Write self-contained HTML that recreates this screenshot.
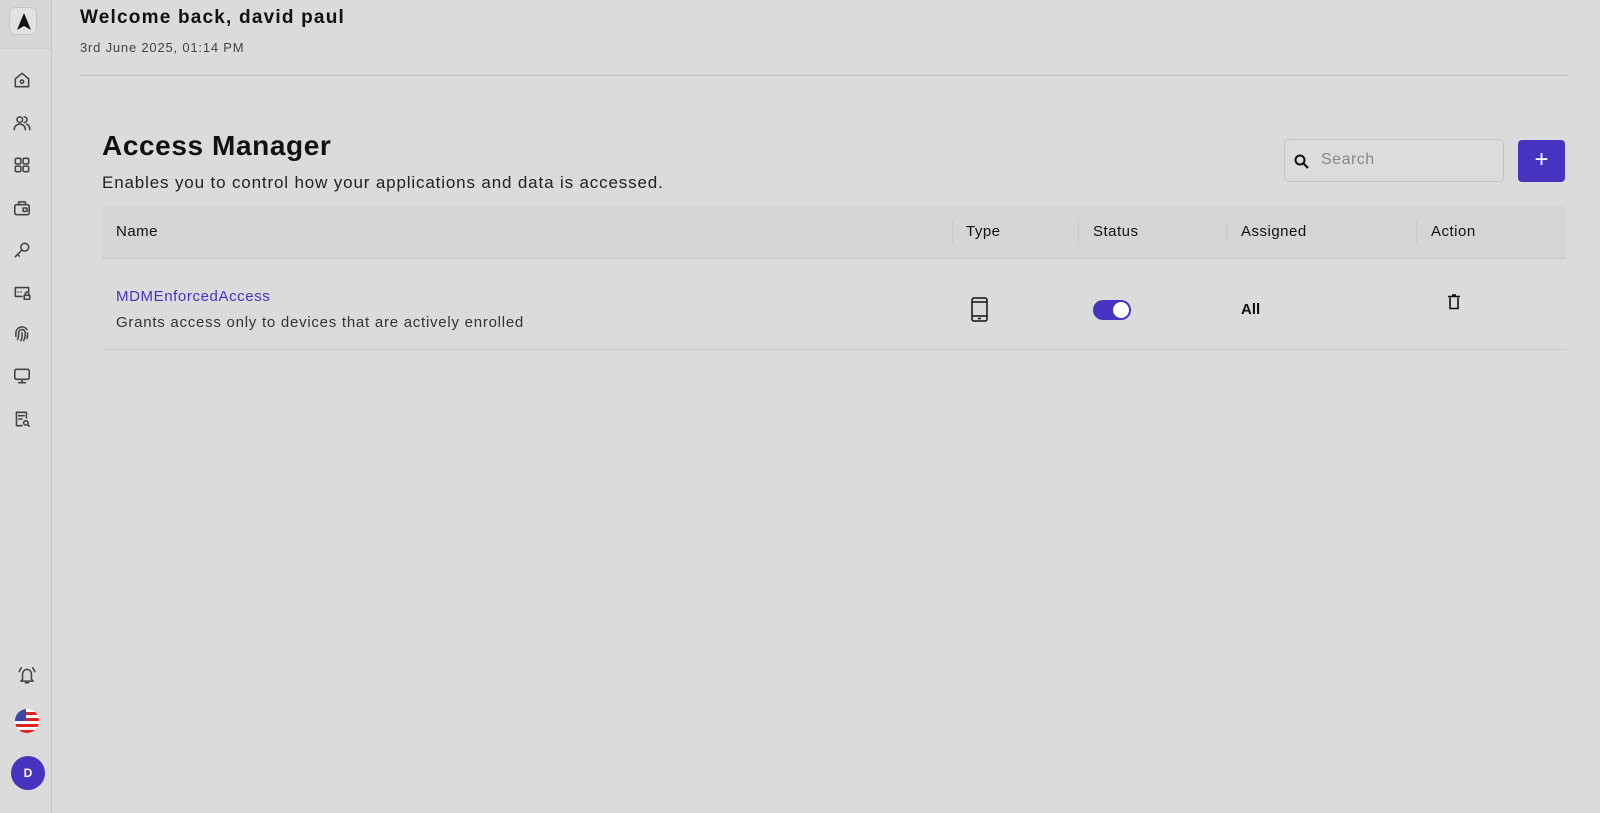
<!DOCTYPE html>
<html><head><style>
*{box-sizing:border-box;margin:0;padding:0}
body{width:1600px;height:813px;background:#dbdbdb;font-family:"Liberation Sans",sans-serif;color:#111;position:relative;overflow:hidden}
.side{position:absolute;left:0;top:0;width:52px;height:813px;border-right:1px solid #c8c8c8}
.logo{position:absolute;left:0;top:0;width:51px;height:49px;background:#d6d6d6;border-bottom:1px solid #cfcfcf}
.logo div{position:absolute;left:9px;top:7px;width:28px;height:28px;border:1px solid #c6c6c6;border-radius:7px;background:#e2e2e2}
.ic{position:absolute;left:12px;width:20px;height:20px}
.ic svg{width:20px;height:20px;fill:none;stroke:#444;stroke-width:1.4;stroke-linecap:round;stroke-linejoin:round}
.t{position:absolute;white-space:nowrap}
</style></head><body>
<div class="side">
<div class="logo"><div><svg width="28" height="28" viewBox="0 0 28 28"><path d="M14 5 L21 22 L14 18 L7 22Z" fill="#111"/></svg></div></div>
<div class="ic" style="top:70px"><svg viewBox="0 0 18 18"><path d="M3 8 L9 3 L15 8 V15 H3Z"/><circle cx="9" cy="10.5" r="1.5"/></svg></div>
<div class="ic" style="top:113px"><svg viewBox="0 0 18 18"><circle cx="7" cy="6" r="2.5"/><path d="M2 15c0-3 2-5 5-5s5 2 5 5"/><path d="M11 3.5a2.5 2.5 0 010 5M13 10c2 .5 3 2.5 3 5"/></svg></div>
<div class="ic" style="top:155px"><svg viewBox="0 0 18 18"><rect x="3" y="3" width="5" height="5" rx="1"/><rect x="10" y="3" width="5" height="5" rx="1"/><rect x="3" y="10" width="5" height="5" rx="1"/><rect x="10" y="10" width="5" height="5" rx="1"/></svg></div>
<div class="ic" style="top:198px"><svg viewBox="0 0 18 18"><rect x="2.5" y="6" width="13" height="9" rx="1.5"/><path d="M6 6V3.5h6V6"/><rect x="10" y="9" width="3.5" height="3"/></svg></div>
<div class="ic" style="top:240px"><svg viewBox="0 0 18 18"><circle cx="11.5" cy="6.5" r="3.5"/><path d="M9 9 L3 15 M5 13 L6.5 14.5"/></svg></div>
<div class="ic" style="top:282px"><svg viewBox="0 0 18 18"><path d="M9 13H3V5h12v4"/><path d="M5.5 9h.1M8 9h.1"/><rect x="11" y="12" width="5" height="3.5"/><path d="M12 12v-1.5a1.5 1.5 0 013 0V12"/></svg></div>
<div class="ic" style="top:324px"><svg viewBox="0 0 18 18"><path d="M5 14c1-2 1-4 1-6a3 3 0 016 0c0 3-.5 5-1.5 7M8 15c1-2 1.3-4.5 1-7M13.5 13c.5-1.5.7-3 .5-5M3.5 11V8a5.5 5.5 0 0110-3"/></svg></div>
<div class="ic" style="top:366px"><svg viewBox="0 0 18 18"><rect x="2.5" y="3" width="13" height="9" rx="1.5"/><path d="M9 12v3M6 15h6"/></svg></div>
<div class="ic" style="top:409px"><svg viewBox="0 0 18 18"><path d="M9 15H4V3h9v5"/><path d="M6 6h5M6 9h3"/><circle cx="12.5" cy="12.5" r="2"/><path d="M14 14l1.5 1.5"/></svg></div>
<div class="ic" style="top:665px;left:17px"><svg viewBox="0 0 18 18"><path d="M5 13V8a4 4 0 018 0v5l1.5 1.5h-11Z"/><path d="M7.5 16h3M2 6c.5-1.5 1-2.5 2-3.5M16 6c-.5-1.5-1-2.5-2-3.5"/></svg></div>
<svg style="position:absolute;left:15px;top:709px" width="24" height="24" viewBox="0 0 24 24"><defs><clipPath id="c"><circle cx="12" cy="12" r="12"/></clipPath></defs><g clip-path="url(#c)"><rect width="24" height="24" fill="#fff"/><rect y="3" width="24" height="3" fill="#d22"/><rect y="9" width="24" height="3" fill="#d22"/><rect y="15" width="24" height="3" fill="#d22"/><rect y="21" width="24" height="3" fill="#d22"/><rect width="11" height="12" fill="#3a47a8"/></g></svg>
<div style="position:absolute;left:11px;top:756px;width:34px;height:34px;border-radius:50%;background:#4634c0;color:#fff;font-size:12px;font-weight:bold;text-align:center;line-height:34px">D</div>
</div>
<div class="t" style="left:80px;top:7px;font-size:19px;font-weight:bold;letter-spacing:1.2px">Welcome back, david paul</div>
<div class="t" style="left:80px;top:40px;font-size:13px;color:#444;letter-spacing:0.8px">3rd June 2025, 01:14 PM</div>
<div style="position:absolute;left:80px;top:75px;width:1488px;border-top:1px solid #bdbdbd"></div>
<div class="t" style="left:102px;top:130px;font-size:28px;font-weight:bold;letter-spacing:0.6px">Access Manager</div>
<div class="t" style="left:102px;top:173px;font-size:17px;color:#222;letter-spacing:0.85px">Enables you to control how your applications and data is accessed.</div>
<div style="position:absolute;left:1284px;top:139px;width:220px;height:43px;border:1px solid #c4c4c4;border-radius:5px;background:#dcdcdc"></div>
<svg style="position:absolute;left:1293px;top:153px" width="18" height="18" viewBox="0 0 18 18"><circle cx="7" cy="7" r="4.5" fill="none" stroke="#111" stroke-width="2"/><path d="M10.5 10.5L15 15" stroke="#111" stroke-width="2.2"/></svg>
<div class="t" style="left:1321px;top:151px;font-size:16px;color:#888;letter-spacing:0.5px">Search</div>
<div style="position:absolute;left:1518px;top:140px;width:47px;height:42px;border-radius:4px;background:#4634c0;color:#fff;font-size:24px;text-align:center;line-height:40px">+</div>
<div style="position:absolute;left:102px;top:206px;width:1464px;height:53px;background:#d5d5d5;border-bottom:1px solid #c9c9c9;border-radius:4px 4px 0 0"></div>
<div class="t" style="left:116px;top:223px;font-size:15px;letter-spacing:0.5px">Name</div>
<div class="t" style="left:966px;top:223px;font-size:15px;letter-spacing:0.5px">Type</div>
<div class="t" style="left:1093px;top:223px;font-size:15px;letter-spacing:0.5px">Status</div>
<div class="t" style="left:1241px;top:223px;font-size:15px;letter-spacing:0.5px">Assigned</div>
<div class="t" style="left:1431px;top:223px;font-size:15px;letter-spacing:0.5px">Action</div>
<div style="position:absolute;left:952px;top:220px;height:24px;border-left:1px solid #cacaca"></div>
<div style="position:absolute;left:1078px;top:220px;height:24px;border-left:1px solid #cacaca"></div>
<div style="position:absolute;left:1226px;top:220px;height:24px;border-left:1px solid #cacaca"></div>
<div style="position:absolute;left:1416px;top:220px;height:24px;border-left:1px solid #cacaca"></div>
<div class="t" style="left:116px;top:288px;font-size:15px;color:#4634c0;letter-spacing:0.6px">MDMEnforcedAccess</div>
<div class="t" style="left:116px;top:314px;font-size:15px;color:#333;letter-spacing:0.75px">Grants access only to devices that are actively enrolled</div>
<svg style="position:absolute;left:970px;top:297px" width="20" height="26" viewBox="0 0 20 26"><rect x="2" y="1" width="15" height="23" rx="2" fill="none" stroke="#111" stroke-width="1.5"/><path d="M2 5h15M2 19h15M8 21.5h3" stroke="#111" stroke-width="1.5"/></svg>
<div style="position:absolute;left:1093px;top:300px;width:38px;height:20px;border-radius:10px;background:#4634c0"><div style="position:absolute;right:2px;top:2px;width:16px;height:16px;border-radius:50%;background:#fff"></div></div>
<div class="t" style="left:1241px;top:301px;font-size:15px;font-weight:bold">All</div>
<svg style="position:absolute;left:1447px;top:294px" width="14" height="16" viewBox="0 0 14 16"><path d="M1 2.5h12M5 1h4M3 3.5v11h8v-11" fill="none" stroke="#111" stroke-width="1.6"/></svg>
<div style="position:absolute;left:102px;top:349px;width:1464px;border-top:1px solid #cacaca"></div>
</body></html>
